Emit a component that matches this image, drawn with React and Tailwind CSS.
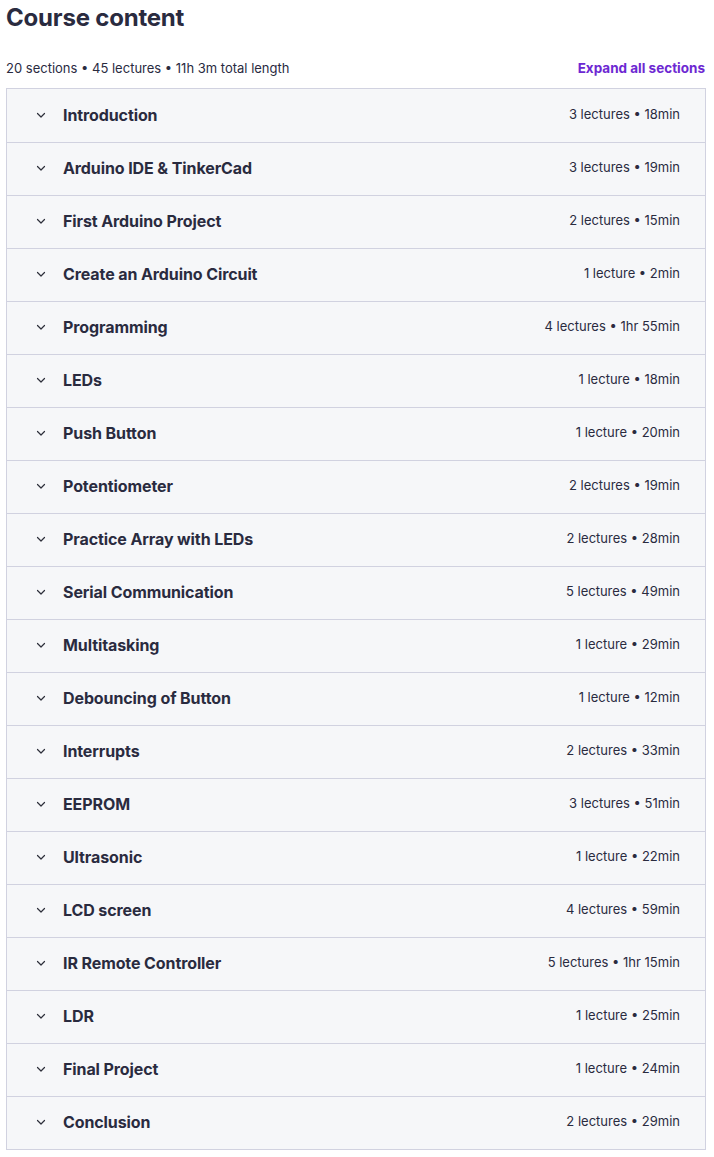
import React from "react";

const sections = [
  ["Introduction", "3 lectures • 18min"],
  ["Arduino IDE & TinkerCad", "3 lectures • 19min"],
  ["First Arduino Project", "2 lectures • 15min"],
  ["Create an Arduino Circuit", "1 lecture • 2min"],
  ["Programming", "4 lectures • 1hr 55min"],
  ["LEDs", "1 lecture • 18min"],
  ["Push Button", "1 lecture • 20min"],
  ["Potentiometer", "2 lectures • 19min"],
  ["Practice Array with LEDs", "2 lectures • 28min"],
  ["Serial Communication", "5 lectures • 49min"],
  ["Multitasking", "1 lecture • 29min"],
  ["Debouncing of Button", "1 lecture • 12min"],
  ["Interrupts", "2 lectures • 33min"],
  ["EEPROM", "3 lectures • 51min"],
  ["Ultrasonic", "1 lecture • 22min"],
  ["LCD screen", "4 lectures • 59min"],
  ["IR Remote Controller", "5 lectures • 1hr 15min"],
  ["LDR", "1 lecture • 25min"],
  ["Final Project", "1 lecture • 24min"],
  ["Conclusion", "2 lectures • 29min"],
];

function Chevron() {
  return (
    <svg width="12" height="12" viewBox="0 0 12 12" fill="none" className="shrink-0">
      <path d="M2.5 4.5L6 8L9.5 4.5" stroke="#2d2f3a" strokeWidth="1.2" strokeLinecap="round" strokeLinejoin="round" />
    </svg>
  );
}

export default function App() {
  return (
    <div className="bg-white text-[#2a2b3f] pl-[6px] pr-[8px] pb-2" style={{ fontFamily: "Inter, 'Noto Sans', sans-serif" }}>
      <h2 className="text-[24px] font-bold leading-[36px] tracking-[-0.2px]">Course content</h2>
      <div className="flex items-center justify-between mt-[16px] h-[36px] pb-[3px]">
        <span className="text-[13px]">20 sections • 45 lectures • 11h 3m total length</span>
        <span className="text-[13.5px] font-bold text-[#6d28d2] mr-[1px]">Expand all sections</span>
      </div>
      <div className="border border-[#d1d2e0]">
        {sections.map(([t, m], i) => (
          <div
            key={i}
            className={"flex items-center h-[53px] bg-[#f6f7f9] pl-[28px] pr-[25px] pb-[2px] " + (i > 0 ? "border-t border-[#d1d2e0]" : "")}
          >
            <Chevron />
            <span className="ml-[16px] text-[16px] font-bold flex-1 tracking-[-0.1px]">{t}</span>
            <span className="text-[13px]">{m}</span>
          </div>
        ))}
      </div>
    </div>
  );
}
